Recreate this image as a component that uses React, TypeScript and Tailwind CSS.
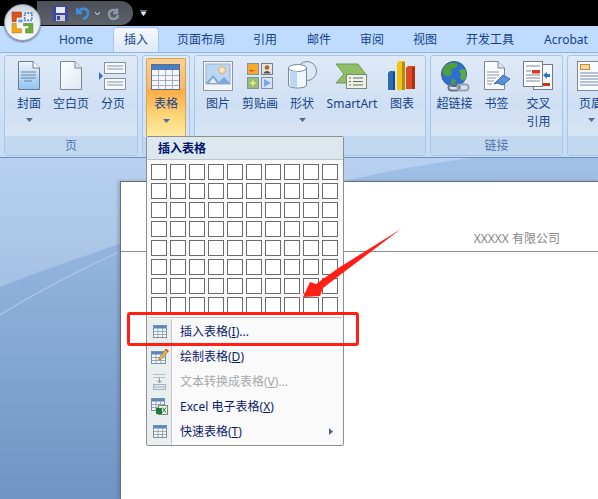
import type { ReactNode } from "react";

const TableIcon = () => (
    <svg width="30" height="27" viewBox="0 0 30 27">
        <rect x="0.5" y="0.5" width="28" height="25" fill="#f4f6fa" stroke="#5f6f88" />
        <rect x="1" y="1" width="27" height="5" fill="#4a7cc4" />
        {[7.5, 14.5, 21.5].map((x) => (
            <path key={x} d={`M${x} 6V25`} stroke="#a5aebc" />
        ))}
        {[11.5, 16.5, 21.5].map((y) => (
            <path key={y} d={`M1 ${y}H28`} stroke="#a5aebc" />
        ))}
    </svg>
);

const CoverIcon = () => (
    <svg width="24" height="30" viewBox="0 0 24 30">
        <defs>
            <linearGradient id="cover" x1="0" y1="0" x2="0" y2="1">
                <stop offset="0" stopColor="#eef5fd" />
                <stop offset="1" stopColor="#8fc4f2" />
            </linearGradient>
        </defs>
        <path d="M1.5.5H16L22.5 7V28.5H1.5Z" fill="url(#cover)" stroke="#6b7b8e" />
        <path d="M16 .5V7H22.5" fill="#fff" stroke="#6b7b8e" />
        <path d="M4 11H19M4 14H19M4 17H19M7 20H15" stroke="#6f8198" strokeWidth="1.2" />
    </svg>
);

const BlankIcon = () => (
    <svg width="24" height="30" viewBox="0 0 24 30">
        <defs>
            <linearGradient id="blank" x1="0" y1="0" x2="1" y2="1">
                <stop offset="0" stopColor="#ffffff" />
                <stop offset="1" stopColor="#dfe8f4" />
            </linearGradient>
        </defs>
        <path d="M1.5.5H16L22.5 7V28.5H1.5Z" fill="url(#blank)" stroke="#7a8797" />
        <path d="M16 .5V7H22.5" fill="#dfe6ee" stroke="#7a8797" />
    </svg>
);

const BreakIcon = () => (
    <svg width="28" height="30" viewBox="0 0 28 30">
        <path d="M0 11L4 15L0 19Z" fill="#3a6cc8" />
        <rect x="5.5" y="1.5" width="21" height="11" fill="#f7f9fc" stroke="#8492a4" />
        <rect x="5.5" y="17.5" width="21" height="11" fill="#f7f9fc" stroke="#8492a4" />
        <path d="M8 5H24M8 8H24M8 21H24M8 24H24" stroke="#8492a4" />
    </svg>
);

const PictureIcon = () => (
    <svg width="30" height="30" viewBox="0 0 30 30">
        <rect x="0.5" y="0.5" width="29" height="29" fill="#f2f5f8" stroke="#8a97a6" />
        <rect x="3" y="3" width="24" height="20" fill="#bcd7f3" stroke="#9fb2c8" />
        <circle cx="19" cy="9" r="3.5" fill="#fbe3c0" stroke="#eaa35c" />
        <path d="M3 22L10 14L16 21L21 16L27 22V23H3Z" fill="#7ea6da" />
        <path d="M6 22L10 17L14 22Z" fill="#e8f0fa" />
    </svg>
);

const ClipArtIcon = () => (
    <svg width="26" height="26" viewBox="0 0 26 26">
        <rect x="0.5" y="0.5" width="11" height="11" fill="#f6a92c" stroke="#8a8f98" />
        <path d="M2 7H8L4 9Z" fill="#d9541e" />
        <rect x="14.5" y="0.5" width="11" height="11" fill="#e6e3dc" stroke="#7a7f88" />
        <circle cx="20" cy="4.5" r="2.3" fill="#b55f2a" />
        <path d="M16.5 10.5C17 7 23 7 23.5 10.5Z" fill="#55524f" />
        <rect x="0.5" y="14.5" width="11" height="11" fill="#8fbf7a" stroke="#8a8f98" />
        <path d="M6 16L7 19L10 20L7 21L6 24L5 21L2 20L5 19Z" fill="#f7ef7a" />
        <rect x="14.5" y="14.5" width="11" height="11" fill="#d4e4f8" stroke="#8a8f98" />
        <path d="M17 16L24 20L17 24Z" fill="#7ba5e4" />
    </svg>
);

const ShapesIcon = () => (
    <svg width="31" height="30" viewBox="0 0 31 30">
        <circle cx="20" cy="10" r="9.5" fill="#dbe8f6" stroke="#76899e" />
        <path d="M1.5 7V24C1.5 28 19.5 28 19.5 24V7Z" fill="#f0f6fd" stroke="#76899e" />
        <ellipse cx="10.5" cy="7" rx="9" ry="3.5" fill="#fff" stroke="#76899e" />
        <path d="M3 10V24C5 26 9 26.5 10 26.5V10.5Z" fill="#bcd6f2" />
    </svg>
);

const SmartArtIcon = () => (
    <svg width="32" height="26" viewBox="0 0 32 26">
        <path d="M0 1H22L31 13L22 20H0L8 11Z" fill="#8fbe64" stroke="#6d9a4a" />
        <rect x="10.5" y="11.5" width="20" height="14" fill="#eef1e4" stroke="#7d8a78" />
        <path d="M13 15H15M17 15H27M13 18.5H15M17 18.5H27M13 22H15M17 22H27" stroke="#5f6f60" />
    </svg>
);

const ChartIcon = () => (
    <svg width="30" height="30" viewBox="0 0 30 30">
        <path d="M1 12L3 10H8V29H1Z" fill="#2d6bb0" />
        <path d="M6 11H8V29H6Z" fill="#174a86" />
        <path d="M10 2L12 0H18V29H10Z" fill="#f1c40f" />
        <path d="M15 1H18V29H15Z" fill="#b58d0a" />
        <path d="M19 7L21 5H28V28H19Z" fill="#dd4a1f" />
        <path d="M25 6H28V28H25Z" fill="#a83212" />
    </svg>
);

const GlobeIcon = () => (
    <svg width="32" height="31" viewBox="0 0 32 31">
        <circle cx="15" cy="13" r="12.5" fill="#2b6fd0" stroke="#2c5a8a" />
        <path d="M6 5C10 1 16 1 19 3L17 7L12 8L13 13L9 16L4 13C3 10 4 7 6 5Z" fill="#4f9e3a" />
        <path d="M20 9L26 8C28 12 27 17 25 20L21 17L22 13Z" fill="#5dab3f" />
        <path d="M12 18L17 19L15 25C13 24 12 22 12 18Z" fill="#4f9e3a" />
        <rect x="9.5" y="23.5" width="11" height="6" rx="3" fill="none" stroke="#6b7480" strokeWidth="2" />
        <rect x="18.5" y="23.5" width="11" height="6" rx="3" fill="none" stroke="#9aa2ac" strokeWidth="2" />
    </svg>
);

const BookmarkIcon = () => (
    <svg width="28" height="30" viewBox="0 0 28 30">
        <path d="M1.5.5H15L21.5 7V28.5H1.5Z" fill="#f8fafc" stroke="#7a8797" />
        <path d="M15 .5V7H21.5" fill="#dfe6ee" stroke="#7a8797" />
        <path d="M4 11H16M4 14H16M4 17H13M4 20H11M4 23H9" stroke="#8b97a6" />
        <path d="M11 23L20 14L27 18L20 24L14 22Z" fill="#5c8fd6" stroke="#3e69a8" />
    </svg>
);

const CrossRefIcon = () => (
    <svg width="31" height="30" viewBox="0 0 31 30">
        <rect x="10.5" y="3.5" width="19" height="25" fill="#f6f8fb" stroke="#6f7c8c" />
        <rect x="19" y="22" width="8" height="3" fill="#c8341c" />
        <path d="M20 14L24 11V13H27V16H24V18Z" fill="#2f74c4" />
        <rect x="0.5" y="0.5" width="19" height="25" fill="#ffffff" stroke="#6f7c8c" />
        <rect x="9" y="9" width="8" height="3.5" fill="#d9391c" />
        <path d="M3 5H17M3 10H8M3 14H17M3 17H17M3 20H17" stroke="#6f87a8" />
    </svg>
);

const HeaderIcon = () => (
    <svg width="28" height="30" viewBox="0 0 28 30">
        <rect x="0.5" y="0.5" width="27" height="29" fill="#f8fafc" stroke="#7a8797" />
        <rect x="3.5" y="3.5" width="9" height="5" fill="#fbdca0" stroke="#c98a2e" />
        <path d="M3 12H25M3 15H25M3 18H25M3 21H25M3 24H25" stroke="#6f87b4" />
    </svg>
);

const Caret = () => (
    <svg width="7" height="4" viewBox="0 0 7 4" className="block">
        <path d="M0 0H7L3.5 4Z" fill="#4f6f9c" />
    </svg>
);

function RibbonButton({
    width,
    icon,
    label,
    caret,
}: {
    width: string;
    icon: ReactNode;
    label: ReactNode;
    caret?: boolean;
}) {
    return (
        <div className={`flex h-full flex-col items-center ${width}`}>
            <div className="flex h-[34px] items-center justify-center">{icon}</div>
            <div className="mt-[2px] text-center text-[12px] leading-[18px] whitespace-nowrap text-[#15428b]">
                {label}
            </div>
            {caret && (
                <div className="mt-[5px]">
                    <Caret />
                </div>
            )}
        </div>
    );
}

function Group({ width, label, children }: { width: string; label?: string; children: ReactNode }) {
    return (
        <div
            className={`flex h-[101px] shrink-0 flex-col overflow-hidden rounded-[3px] border border-[#a9c5e6] bg-gradient-to-b from-[#dfeaf8] via-[#cfdff3] to-[#dce8f6] ${width}`}
        >
            <div className="flex flex-1 justify-center pt-[3px]">{children}</div>
            <div className="h-[19px] bg-[#c2d8f0] text-center text-[12px] leading-[19px] text-[#4f74a8]">{label}</div>
        </div>
    );
}

const tabs = [
    { name: "Home", width: "w-[64px]" },
    { name: "插入", width: "w-[46px] ml-[5px]", active: true },
    { name: "页面布局", width: "w-[84px]" },
    { name: "引用", width: "w-[44px]" },
    { name: "邮件", width: "w-[64px]" },
    { name: "审阅", width: "w-[42px]" },
    { name: "视图", width: "w-[64px]" },
    { name: "开发工具", width: "w-[66px]" },
    { name: "Acrobat", width: "w-[86px]" },
];

const MenuTable = () => (
    <svg width="14" height="13" viewBox="0 0 14 13">
        <rect x="0.5" y="0.5" width="13" height="12" fill="#f4f7fb" stroke="#7d8da3" />
        <rect x="1" y="1" width="12" height="2.5" fill="#5b86c6" />
        <path d="M5 3V12M9.5 3V12M1 6.5H13M1 9.5H13" stroke="#9aa8ba" />
    </svg>
);

const MenuDraw = () => (
    <svg width="18" height="17" viewBox="0 0 18 17">
        <rect x="0.5" y="3.5" width="14" height="12" fill="#f4f7fb" stroke="#7d8da3" />
        <rect x="1" y="4" width="13" height="2.5" fill="#5b86c6" />
        <path d="M5 6V15M10 6V15M1 9.5H14M1 12.5H14" stroke="#9aa8ba" />
        <path d="M8 10L15 1L17.5 3L10 11.5L7.5 12Z" fill="#e8b84a" stroke="#8a6a20" strokeWidth="0.6" />
        <path d="M15 1L17.5 3L16.5 4L14 2Z" fill="#d9482a" />
    </svg>
);

const MenuConvert = () => (
    <svg width="13" height="16" viewBox="0 0 13 16">
        <path d="M0 .5H12M0 3.5H12" stroke="#b5bcc6" />
        <path d="M6.5 4V8M4.5 6.5L6.5 9L8.5 6.5" stroke="#8a95a5" fill="none" />
        <rect x="0.5" y="10.5" width="12" height="5" fill="#dfe6ee" stroke="#aab4c1" />
        <path d="M1 13H12" stroke="#aab4c1" />
    </svg>
);

const MenuExcel = () => (
    <svg width="17" height="17" viewBox="0 0 17 17">
        <rect x="0.5" y="0.5" width="13" height="12" fill="#f4f7fb" stroke="#7d8da3" />
        <rect x="1" y="1" width="12" height="2.5" fill="#5b86c6" />
        <path d="M5 3V12M9.5 3V12M1 6.5H13M1 9.5H13" stroke="#9aa8ba" />
        <rect x="7.5" y="7.5" width="9" height="9" fill="#f2f7ee" stroke="#7a8a70" />
        <rect x="5" y="10" width="6" height="6" fill="#1f7a3a" />
        <path d="M11.5 9.5L15 14.5M15 9.5L11.5 14.5" stroke="#1f7a3a" />
    </svg>
);

function MenuItem({
    icon,
    disabled,
    children,
    submenu,
}: {
    icon: ReactNode;
    disabled?: boolean;
    children: ReactNode;
    submenu?: boolean;
}) {
    return (
        <div className="flex h-[25px] items-center">
            <div className="flex h-full w-[25px] shrink-0 items-center justify-center">{icon}</div>
            <div className={`ml-[8px] flex-1 text-[12px] ${disabled ? "text-[#a8a8a8]" : "text-[#0a1a6b]"}`}>{children}</div>
            {submenu && (
                <svg width="4" height="7" viewBox="0 0 4 7" className="mr-[10px]">
                    <path d="M0 0L4 3.5L0 7Z" fill="#4f6488" />
                </svg>
            )}
        </div>
    );
}

function TableMenu() {
    return (
        <div className="absolute top-[136px] left-[146px] h-[310px] w-[198px] rounded-[2px] border border-[#8f8f8f] bg-[#fafafa]">
            <div className="h-[23px] border-b border-[#bcc4cb] bg-[#dde7ee] pl-[11px] text-[12px] leading-[23px] font-bold text-[#00156e]">
                插入表格
            </div>
            <div className="grid grid-cols-[repeat(10,16px)] gap-[3px] px-[4px] pt-[4px]">
                {Array.from({ length: 80 }).map((_, i) => (
                    <div key={i} className="h-[16px] w-[16px] border border-[#6b6b6b] bg-white" />
                ))}
            </div>
            <div className="mx-[1px] mt-[4px] h-[1px] bg-[#c4c4c4]" />
            <div className="relative mt-[1px] h-[126px]">
                <div className="absolute top-0 bottom-0 left-0 w-[25px] border-r border-[#c5c9cb] bg-[#e9eeee]" />
                <div className="relative">
                    <MenuItem icon={<MenuTable />}>
                        插入表格(<span className="underline">I</span>)...
                    </MenuItem>
                    <MenuItem icon={<MenuDraw />}>
                        绘制表格(<span className="underline">D</span>)
                    </MenuItem>
                    <MenuItem icon={<MenuConvert />} disabled>
                        文本转换成表格(<span className="underline">V</span>)...
                    </MenuItem>
                    <MenuItem icon={<MenuExcel />}>
                        Excel 电子表格(<span className="underline">X</span>)
                    </MenuItem>
                    <MenuItem icon={<MenuTable />} submenu>
                        快速表格(<span className="underline">T</span>)
                    </MenuItem>
                </div>
            </div>
        </div>
    );
}

export default function App() {
    return (
        <div className="relative flex h-[499px] w-[598px] flex-col overflow-hidden bg-[#8aabd6] font-['Noto_Sans','Noto_Sans_CJK_SC',sans-serif]">
            {/* Title bar with quick access */}
            <div className="flex h-[26px] shrink-0 items-center bg-black pl-[37px]">
                <div className="flex h-[24px] w-[96px] items-center rounded-r-[12px] bg-gradient-to-b from-[#4c5058] to-[#5e626a] pl-[16px]">
                    <svg width="15" height="15" viewBox="0 0 15 15">
                        <rect width="15" height="15" fill="#3d46a8" />
                        <rect x="3" y="1" width="9" height="6" fill="#e8ecf6" />
                        <rect x="3" y="9" width="9" height="6" fill="#c9cdd6" />
                        <rect x="4" y="10" width="3" height="4" fill="#3d46a8" />
                    </svg>
                    <svg width="14" height="14" viewBox="0 0 14 14" className="ml-[8px]">
                        <path d="M1 2V7H6M2 6C5 1 12 2 12 7C12 10 10 12 7 13" fill="none" stroke="#3f8fe0" strokeWidth="2.4" />
                    </svg>
                    <svg width="5" height="3" viewBox="0 0 5 3" className="ml-[5px]">
                        <path d="M0 0L2.5 3L5 0" fill="none" stroke="#d5e2f2" />
                    </svg>
                    <svg width="13" height="13" viewBox="0 0 13 13" className="ml-[7px]">
                        <path d="M10 1.5V6H6M10 4.5C7.5 1.5 2 3 2 7C2 10 4 12 6.5 12C9 12 11 10 11 8" fill="none" stroke="#8d9aae" strokeWidth="2.4" />
                    </svg>
                </div>
                <svg width="7" height="6" viewBox="0 0 7 6" className="ml-[7px]">
                    <path d="M0 0H7M1 2L3.5 5.5L6 2Z" stroke="#dfe8f5" fill="#dfe8f5" />
                </svg>
            </div>

            {/* Tabs */}
            <div className="flex h-[27px] shrink-0 items-end overflow-hidden border-b border-[#8db2e3] bg-[#bfdbff] pl-[44px]">
                {tabs.map((tab) => (
                    <div
                        key={tab.name}
                        className={`shrink-0 text-center text-[12px] leading-[24px] whitespace-nowrap text-[#15428b] ${tab.width} ${
                            tab.active
                                ? "-mb-[1px] h-[26px] rounded-t-[3px] border border-b-0 border-[#a5c4ea] bg-gradient-to-b from-[#f4f8fd] to-[#dce8f7]"
                                : "h-[24px]"
                        }`}
                    >
                        {tab.name}
                    </div>
                ))}
            </div>

            {/* Ribbon */}
            <div className="flex h-[105px] shrink-0 gap-[4px] overflow-hidden border-b border-[#6f8fb8] bg-gradient-to-b from-[#d9e7f8] to-[#c4dcf7] pt-[2px] pl-[4px]">
                <Group width="w-[134px]" label="页">
                    <RibbonButton width="w-[42px]" icon={<CoverIcon />} label="封面" caret />
                    <RibbonButton width="w-[42px]" icon={<BlankIcon />} label="空白页" />
                    <RibbonButton width="w-[42px]" icon={<BreakIcon />} label="分页" />
                </Group>
                <Group width="w-[48px]">
                    <div className="relative -mt-[1px] flex h-[79px] w-[40px] flex-col items-center rounded-[2px] border border-[#d8a54c] border-b-[#f2c635] bg-[linear-gradient(to_bottom,#f9cf94_0%,#f7b970_38%,#fbab45_39%,#fdd67c_75%,#fdeb9f_100%)]">
                        <div className="mt-[5px]">
                            <TableIcon />
                        </div>
                        <div className="mt-[4px] text-[12px] leading-[17px] text-[#15428b]">表格</div>
                        <div className="mt-[7px]">
                            <Caret />
                        </div>
                    </div>
                </Group>
                <Group width="w-[232px]">
                    <RibbonButton width="w-[42px]" icon={<PictureIcon />} label="图片" />
                    <RibbonButton width="w-[42px]" icon={<ClipArtIcon />} label="剪贴画" />
                    <RibbonButton width="w-[42px]" icon={<ShapesIcon />} label="形状" caret />
                    <RibbonButton width="w-[58px]" icon={<SmartArtIcon />} label="SmartArt" />
                    <RibbonButton width="w-[42px]" icon={<ChartIcon />} label="图表" />
                </Group>
                <Group width="w-[133px]" label="链接">
                    <RibbonButton width="w-[42px]" icon={<GlobeIcon />} label="超链接" />
                    <RibbonButton width="w-[42px]" icon={<BookmarkIcon />} label="书签" />
                    <RibbonButton
                        width="w-[42px]"
                        icon={<CrossRefIcon />}
                        label={
                            <>
                                交叉
                                <br />
                                引用
                            </>
                        }
                    />
                </Group>
                <Group width="w-[48px]">
                    <RibbonButton width="w-[46px]" icon={<HeaderIcon />} label="页眉" caret />
                </Group>
            </div>

            {/* Document area */}
            <div className="relative flex-1 bg-gradient-to-b from-[#a0c0e7] to-[#6f95c5] pt-[23px] pl-[120px]">
                <svg className="absolute inset-0 h-full w-full" viewBox="0 0 598 341" preserveAspectRatio="none">
                    <defs>
                        <linearGradient id="sky" x1="0" y1="0" x2="0" y2="1">
                            <stop offset="0" stopColor="#b8d1f0" />
                            <stop offset="1" stopColor="#a5c1e3" />
                        </linearGradient>
                    </defs>
                    <path d="M0 129C40 113 80 100 119 86C200 55 280 40 350 22C390 12 430 6 470 0H0Z" fill="url(#sky)" />
                    <path d="M0 157C40 132 80 112 119 94" fill="none" stroke="#a9c3e4" strokeWidth="1.5" />
                </svg>
                <div className="relative h-full border-t border-l border-[#6b6b6b] bg-white shadow-[-2px_0_3px_rgba(60,80,110,0.3)]">
                    <div className="mt-[48px] flex h-[22px] justify-end border-b border-[#8c8c8c] pr-[38px] text-[12px] leading-[18px] text-[#858585]">
                        XXXXX 有限公司
                    </div>
                </div>
            </div>

            <TableMenu />

            {/* Office button */}
            <div className="absolute top-[4px] left-[4px] flex h-[37px] w-[37px] items-center justify-center rounded-full border border-[#8d99a8] bg-[radial-gradient(circle_at_50%_80%,#ffffff_0%,#e8edf2_55%,#b5bdc8_100%)] shadow-[0_1px_2px_rgba(0,0,0,0.5)]">
                <svg width="25" height="25" viewBox="0 0 24 24">
                    <path d="M2 2H11V7H6V11H2Z" fill="#d9541e" stroke="#a83a10" strokeWidth="0.6" />
                    <path d="M2 13H6V18H11V22H2Z" fill="#f2a81d" stroke="#c07f10" strokeWidth="0.6" />
                    <path d="M13 13H22V22H15V18H18V15H13Z" fill="#6fae3a" stroke="#4f8a22" strokeWidth="0.6" />
                    <path d="M14 3H21V10H14Z" fill="none" stroke="#3a78c8" strokeWidth="1.6" strokeDasharray="1.6 1.2" />
                    <path d="M8 9H12V12H8Z" fill="#6f9fd8" />
                </svg>
            </div>

            {/* Annotation over the screenshot */}
            <div className="absolute top-[312px] left-[127px] h-[34px] w-[232px] rounded-[3px] border-[3px] border-[#ff1f14]" />
            <svg className="absolute top-[225px] left-[300px]" width="104" height="75" viewBox="300 225 104 75">
                <path d="M401 229L340 275L323 288L320 296L303 297L310 282L316 284L340 267Z" fill="#ff1f14" />
            </svg>
        </div>
    );
}
